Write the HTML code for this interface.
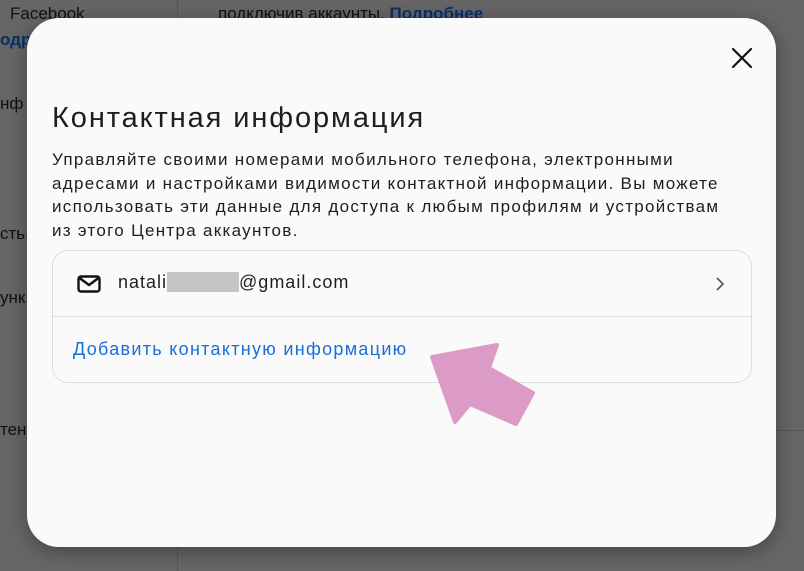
<!DOCTYPE html>
<html><head><meta charset="utf-8"><style>
body{margin:0;width:804px;height:571px;overflow:hidden;background:#666;font-family:"Liberation Sans","DejaVu Sans",sans-serif;position:relative}
.bg{position:absolute;color:#1a1a1a;font-size:17px}
.modal{position:absolute;left:27px;top:18px;width:749px;height:529px;background:#fafafa;border-radius:32px;box-shadow:0 4px 20px rgba(0,0,0,.35)}
h1{position:absolute;left:25px;top:84px;margin:0;font-size:29px;font-weight:normal;color:#1c1e21;letter-spacing:1.9px;white-space:nowrap}
p{position:absolute;left:25px;top:130px;width:720px;margin:0;font-size:17px;line-height:23.7px;color:#1c1e21;letter-spacing:1.3px;white-space:nowrap}
.card{position:absolute;left:25px;top:232px;width:698px;height:131px;border:1px solid #dcdcdc;border-radius:16px}
.row1{height:65px;border-bottom:1px solid #dcdcdc;position:relative}
.mail{position:absolute;top:21px;font-size:18px;color:#1c1e21;letter-spacing:1px}
.blur{display:inline-block;width:72px;height:20px;background:#c4c4c4;vertical-align:-4px}
.add{position:absolute;left:20px;top:88px;font-size:18px;color:#1a6ed8;letter-spacing:1.3px;white-space:nowrap}
</style></head><body>
<div class="bg" style="left:10px;top:4px;color:#111">Facebook</div>
<div class="bg" style="left:0;top:30px;color:#0b2f6b;font-weight:bold">одр</div>
<div class="bg" style="left:0;top:94px;color:#111">нф</div>
<div class="bg" style="left:0;top:224px;color:#111">сть</div>
<div class="bg" style="left:0;top:288px;color:#111">унк</div>
<div class="bg" style="left:0;top:420px;color:#111">тен</div>
<div class="bg" style="left:218px;top:4px;color:#111">подключив аккаунты. <b style="color:#0b2f6b">Подробнее</b></div>
<div style="position:absolute;left:177px;top:0;width:1px;height:571px;background:#555"></div>
<div style="position:absolute;left:776px;top:430px;width:28px;height:1px;background:#555"></div>
<div class="modal">
<svg style="position:absolute;left:704px;top:29px" width="22" height="22" viewBox="0 0 22 22"><path d="M2 2L20 20M20 2L2 20" stroke="#111" stroke-width="2.2" stroke-linecap="round"/></svg>
<h1>Контактная информация</h1>
<p>Управляйте своими номерами мобильного телефона, электронными<br>адресами и настройками видимости контактной информации. Вы можете<br>использовать эти данные для доступа к любым профилям и устройствам<br>из этого Центра аккаунтов.</p>
<div class="card">
<div class="row1">
<svg style="position:absolute;left:24px;top:24px" width="24" height="18" viewBox="0 0 24 18"><rect x="1.5" y="1.5" width="21" height="15" rx="2.5" fill="none" stroke="#111" stroke-width="2.4"/><path d="M2.5 3L12 10L21.5 3" fill="none" stroke="#111" stroke-width="2.4" stroke-linejoin="round"/></svg>
<div class="mail" style="left:65px">natali<span class="blur"></span>@gmail.com</div>
<svg style="position:absolute;left:662px;top:26px" width="10" height="14" viewBox="0 0 10 14"><path d="M2 1L8 7L2 13" fill="none" stroke="#555" stroke-width="1.6"/></svg>
</div>
<div class="add">Добавить контактную информацию</div>
</div>
</div>
<svg style="position:absolute;left:0;top:0" width="804" height="571"><path d="M432 357L497 345L489 368L533 393L516 424L470 404L455 422Z" fill="#dc9ac6" stroke="#dc9ac6" stroke-width="4" stroke-linejoin="round"/></svg>
</body></html>
